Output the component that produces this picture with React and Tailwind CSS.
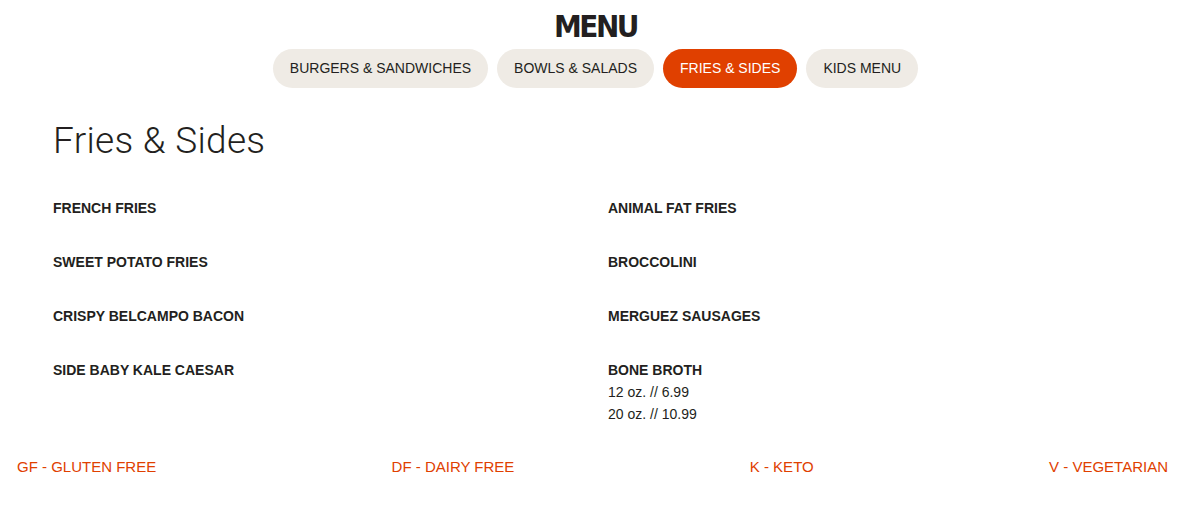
import React from "react";

// Categorias do menu; a ativa é destacada em laranja.
const categories = ["Burgers & Sandwiches", "Bowls & Salads", "Fries & Sides", "Kids Menu"];
const active = "Fries & Sides";

const items = [
  { name: "French Fries" },
  { name: "Animal Fat Fries" },
  { name: "Sweet Potato Fries" },
  { name: "Broccolini" },
  { name: "Crispy Belcampo Bacon" },
  { name: "Merguez Sausages" },
  { name: "Side Baby Kale Caesar" },
  { name: "Bone Broth", prices: ["12 oz. // 6.99", "20 oz. // 10.99"] },
];

const legend = ["GF - Gluten Free", "DF - Dairy Free", "K - Keto", "V - Vegetarian"];

const App = () => {
  return (
    <div className="min-h-[505px] bg-white text-[#231f20] font-['Liberation_Sans',Arial,sans-serif]">
      <h1 className="pt-[6px] text-center text-[31px] leading-[40px] font-bold tracking-[-2.5px] font-['DejaVu_Sans_Condensed','DejaVu_Sans',sans-serif]">
        MENU
      </h1>

      {/* Abas de categorias */}
      <nav className="mt-[3px] flex justify-center gap-[9px]">
        {categories.map((c) => (
          <button
            key={c}
            className={
              c === active
                ? "h-[39px] px-[17px] rounded-full bg-[#e04000] text-white text-[14px] uppercase"
                : "h-[39px] px-[17px] rounded-full bg-[#efebe5] text-[#231f20] text-[14px] uppercase"
            }
          >
            {c}
          </button>
        ))}
      </nav>

      <section className="px-[53px]">
        <h2 className="mt-[30px] text-[37px] leading-[46px] font-light tracking-[0.3px] font-['Roboto',sans-serif]">
          Fries &amp; Sides
        </h2>

        <div className="mt-[33px] grid grid-cols-2 gap-x-[25px]">
          {items.map((item) => (
            <div key={item.name} className="mb-[32px] text-[14px] leading-[22px]">
              <div className="font-bold uppercase">{item.name}</div>
              {item.prices &&
                item.prices.map((p) => (
                  <div key={p} className="text-[14px]">
                    {p}
                  </div>
                ))}
            </div>
          ))}
        </div>
      </section>

      {/* Legenda das restrições alimentares */}
      <footer className="-mt-[1px] flex justify-between pl-[17px] pr-[23px] text-[15px] leading-[22px] uppercase text-[#e04000]">
        {legend.map((l) => (
          <span key={l}>{l}</span>
        ))}
      </footer>
    </div>
  );
};

export default App;
